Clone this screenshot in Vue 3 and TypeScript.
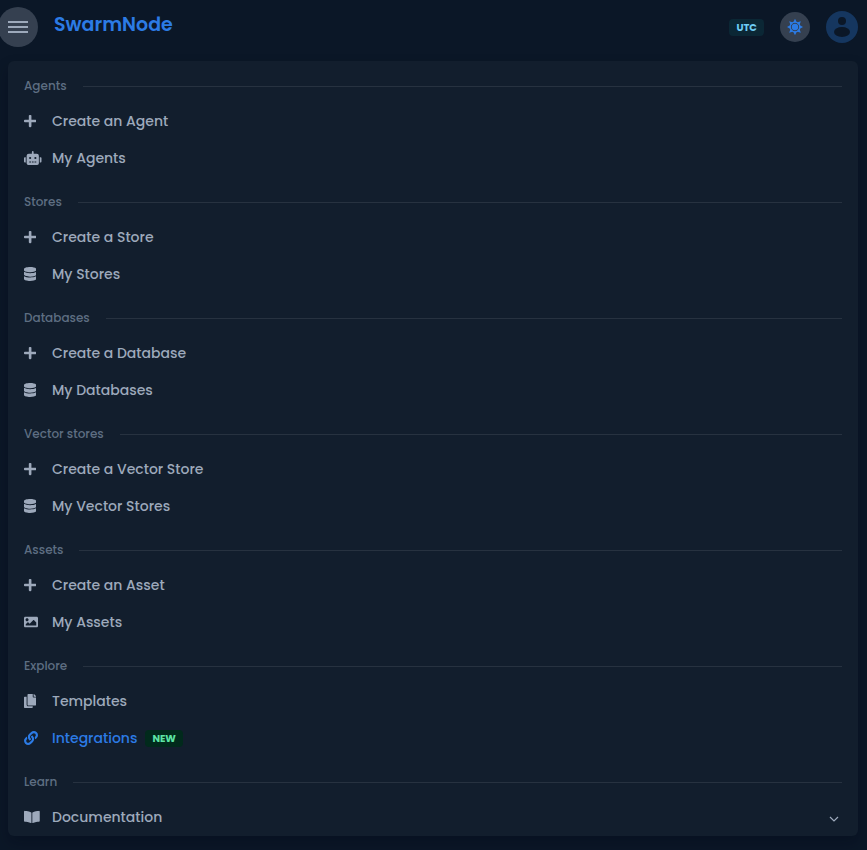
<script setup lang="ts">
interface Item {
  label: string
  icon: string
  active?: boolean
  badge?: string
  expandable?: boolean
}
interface Section {
  title: string
  items: Item[]
}
interface Glyph {
  width: number
  path: string
}

const glyphs: Record<string, Glyph> = {
  plus: {
    width: 448,
    path: 'M416 208H272V64c0-17.67-14.33-32-32-32h-32c-17.67 0-32 14.33-32 32v144H32c-17.67 0-32 14.33-32 32v32c0 17.67 14.33 32 32 32h144v144c0 17.67 14.33 32 32 32h32c17.67 0 32-14.33 32-32V304h144c17.67 0 32-14.33 32-32v-32c0-17.67-14.33-32-32-32z',
  },
  robot: {
    width: 640,
    path: 'M32 224H64V416H32A32 32 0 0 1 0 384V256A32 32 0 0 1 32 224Zm512-48V448a64 64 0 0 1-64 64H160a64 64 0 0 1-64-64V176a80 80 0 0 1 80-80H288V32a32 32 0 0 1 64 0V96H464A80 80 0 0 1 544 176ZM264 256a40 40 0 1 0-40 40A40 40 0 0 0 264 256Zm-8 128H192v32h64Zm96 0H288v32h64ZM456 256a40 40 0 1 0-40 40A40 40 0 0 0 456 256Zm-8 128H384v32h64ZM640 256V384a32 32 0 0 1-32 32H576V224h32A32 32 0 0 1 640 256Z',
  },
  database: {
    width: 448,
    path: 'M448 73.143v45.714C448 159.143 347.667 192 224 192S0 159.143 0 118.857V73.143C0 32.857 100.333 0 224 0s224 32.857 224 73.143zM448 176v102.857C448 319.143 347.667 352 224 352S0 319.143 0 278.857V176c48.125 33.143 136.208 48.572 224 48.572S399.874 209.143 448 176zm0 160v102.857C448 479.143 347.667 512 224 512S0 479.143 0 438.857V336c48.125 33.143 136.208 48.572 224 48.572S399.874 369.143 448 336z',
  },
  image: {
    width: 512,
    path: 'M464 448H48c-26.51 0-48-21.49-48-48V112c0-26.51 21.49-48 48-48h416c26.51 0 48 21.49 48 48v288c0 26.51-21.49 48-48 48zM112 120c-30.928 0-56 25.072-56 56s25.072 56 56 56 56-25.072 56-56-25.072-56-56-56zM64 384h384V272l-87.515-87.515c-4.686-4.686-12.284-4.686-16.971 0L208 320l-55.515-55.515c-4.686-4.686-12.284-4.686-16.971 0L64 336v48z',
  },
  copy: {
    width: 448,
    path: 'M320 448v40c0 13.255-10.745 24-24 24H24c-13.255 0-24-10.745-24-24V120c0-13.255 10.745-24 24-24h72v296c0 30.879 25.121 56 56 56h168zm0-344V0H152c-13.255 0-24 10.745-24 24v368c0 13.255 10.745 24 24 24h272c13.255 0 24-10.745 24-24V128H344c-13.2 0-24-10.8-24-24zm120.971-31.029L375.029 7.029A24 24 0 0 0 358.059 0H352v96h96v-6.059a24 24 0 0 0-7.029-16.97z',
  },
  link: {
    width: 512,
    path: 'M326.612 185.391c59.747 59.809 58.927 155.698.36 214.59-.11.12-.24.25-.36.37l-67.2 67.2c-59.27 59.27-155.699 59.262-214.96 0-59.27-59.26-59.27-155.7 0-214.96l37.106-37.106c9.84-9.84 26.786-3.3 27.294 10.606.648 17.722 3.826 35.527 9.69 52.721 1.986 5.822.567 12.262-3.783 16.612l-13.087 13.087c-28.026 28.026-28.905 73.66-1.155 101.96 28.024 28.579 74.086 28.749 102.325.51l67.2-67.19c28.191-28.191 28.073-73.757 0-101.83-3.701-3.694-7.429-6.564-10.341-8.569a16.037 16.037 0 0 1-6.947-12.606c-.396-10.567 3.348-21.456 11.698-29.806l21.054-21.055c5.521-5.521 14.182-6.199 20.584-1.731a152.482 152.482 0 0 1 20.522 17.197zM467.547 44.449c-59.261-59.262-155.69-59.27-214.96 0l-67.2 67.2c-.12.12-.25.25-.36.37-58.566 58.892-59.387 154.781.36 214.59a152.454 152.454 0 0 0 20.521 17.196c6.402 4.468 15.064 3.789 20.584-1.731l21.054-21.055c8.35-8.35 12.094-19.239 11.698-29.806a16.037 16.037 0 0 0-6.947-12.606c-2.912-2.005-6.64-4.875-10.341-8.569-28.073-28.073-28.191-73.639 0-101.83l67.2-67.19c28.239-28.239 74.3-28.069 102.325.51 27.75 28.3 26.872 73.934-1.155 101.96l-13.087 13.087c-4.35 4.35-5.769 10.79-3.783 16.612 5.864 17.194 9.042 34.999 9.69 52.721.509 13.906 17.454 20.446 27.294 10.606l37.106-37.106c59.271-59.259 59.271-155.699.001-214.959z',
  },
  book: {
    width: 576,
    path: 'M542.22 32.05c-54.8 3.11-163.72 14.43-230.96 55.59-4.64 2.84-7.27 7.89-7.27 13.17v363.87c0 11.55 12.63 18.85 23.28 13.49 69.18-34.82 169.23-44.32 218.7-46.92 16.89-.89 30.02-14.43 30.02-30.66V62.75c.01-17.71-15.35-31.74-33.77-30.7zM264.73 87.64C197.5 46.48 88.58 35.17 33.78 32.05 15.36 31.01 0 45.04 0 62.75V400.6c0 16.24 13.13 29.78 30.02 30.66 49.49 2.6 149.59 12.11 218.77 46.95 10.62 5.35 23.21-1.94 23.21-13.46V100.63c0-5.29-2.62-10.14-7.27-12.99z',
  },
}

const sections: Section[] = [
  { title: 'Agents', items: [{ label: 'Create an Agent', icon: 'plus' }, { label: 'My Agents', icon: 'robot' }] },
  { title: 'Stores', items: [{ label: 'Create a Store', icon: 'plus' }, { label: 'My Stores', icon: 'database' }] },
  { title: 'Databases', items: [{ label: 'Create a Database', icon: 'plus' }, { label: 'My Databases', icon: 'database' }] },
  { title: 'Vector stores', items: [{ label: 'Create a Vector Store', icon: 'plus' }, { label: 'My Vector Stores', icon: 'database' }] },
  { title: 'Assets', items: [{ label: 'Create an Asset', icon: 'plus' }, { label: 'My Assets', icon: 'image' }] },
  { title: 'Explore', items: [{ label: 'Templates', icon: 'copy' }, { label: 'Integrations', icon: 'link', active: true, badge: 'NEW' }] },
  { title: 'Learn', items: [{ label: 'Documentation', icon: 'book', expandable: true }] },
]

const rays = [0, 45, 90, 135, 180, 225, 270, 315]
</script>

<template>
  <div class="page">
    <header class="topbar">
      <button class="menu" type="button" aria-label="Toggle navigation">
        <svg width="20" height="12" viewBox="0 0 20 12" aria-hidden="true">
          <path d="M0 1h20M0 6h20M0 11h20" stroke="currentColor" stroke-width="2" />
        </svg>
      </button>
      <a class="brand" href="#">SwarmNode</a>
      <div class="tools">
        <span class="zone">UTC</span>
        <button class="theme" type="button" aria-label="Switch theme">
          <svg width="16" height="16" viewBox="0 0 16 16" aria-hidden="true">
            <path v-for="r in rays" :key="r" d="M8 -0.2L9.9 3.6H6.1Z" :transform="`rotate(${r} 8 8)`" fill="currentColor" />
            <circle cx="8" cy="8" r="4.8" fill="none" stroke="currentColor" stroke-width="1.3" />
            <circle cx="8" cy="8" r="3.2" fill="currentColor" />
          </svg>
        </button>
        <button class="account" type="button" aria-label="Account">
          <svg width="32" height="32" viewBox="0 0 32 32" aria-hidden="true">
            <circle cx="16" cy="10" r="4" fill="currentColor" />
            <ellipse cx="16" cy="21" rx="8" ry="5" fill="currentColor" />
          </svg>
        </button>
      </div>
    </header>

    <nav class="panel" aria-label="Main">
      <section v-for="section in sections" :key="section.title">
        <h2 class="heading">{{ section.title }}</h2>
        <ul class="items">
          <li v-for="item in section.items" :key="item.label">
            <a class="item" :class="{ active: item.active }" href="#">
              <span class="icon">
                <svg height="14" :viewBox="`0 0 ${glyphs[item.icon].width} 512`" aria-hidden="true">
                  <path :d="glyphs[item.icon].path" fill="currentColor" />
                </svg>
              </span>
              <span>{{ item.label }}</span>
              <span v-if="item.badge" class="badge">{{ item.badge }}</span>
              <svg v-if="item.expandable" class="chevron" width="10" height="6" viewBox="0 0 10 6" aria-hidden="true">
                <path d="M1 1l4 4 4-4" fill="none" stroke="currentColor" stroke-width="1.2" />
              </svg>
            </a>
          </li>
        </ul>
      </section>
    </nav>
  </div>
</template>

<style>
body {
  background: #0b1727;
}
</style>

<style scoped>
.page {
  min-height: 100vh;
  box-sizing: border-box;
  padding-bottom: 14px;
  overflow: hidden;
  background: #0b1727;
  color: #9da9bb;
  font-family: Poppins, Inter, "Liberation Sans", sans-serif;
}
button {
  display: flex;
  align-items: center;
  justify-content: center;
  padding: 0;
  border: 0;
  border-radius: 50%;
  cursor: pointer;
}
a {
  text-decoration: none;
}
.topbar {
  display: flex;
  align-items: center;
  height: 54px;
  margin-bottom: 7px;
  padding-right: 9px;
}
.menu {
  flex: none;
  width: 40px;
  height: 40px;
  margin-left: -2px;
  background: #354050;
  color: #9da9bb;
}
.brand {
  margin-left: 16px;
  padding-bottom: 4px;
  color: #2c7be5;
  font-size: 19px;
  font-weight: 600;
  line-height: 30px;
}
.tools {
  display: flex;
  align-items: center;
  gap: 16px;
  margin-left: auto;
}
.zone,
.badge {
  border-radius: 4px;
  padding: 0 7px;
  font-size: 10px;
  font-weight: 700;
  line-height: 17px;
}
.zone {
  background: #0b2735;
  color: #6fcdf5;
}
.badge {
  margin: 0 0 1px 8px;
  background: #012a1c;
  color: #5de5a5;
}
.theme {
  width: 30px;
  height: 30px;
  background: #354050;
  color: #2c7be5;
}
.account {
  width: 32px;
  height: 32px;
  background: #15365f;
  color: #0b1727;
}
.panel {
  margin: 0 9px 0 8px;
  padding: 0 16px;
  border-radius: 6px;
  background: #121e2d;
  box-shadow: 0 7px 14px rgba(0, 8, 24, 0.3);
  overflow: hidden;
}
.heading {
  display: flex;
  align-items: center;
  gap: 16px;
  margin: 16px 0 8px;
  color: #5e6e82;
  font-size: 12px;
  font-weight: 500;
  line-height: 18px;
}
.heading::after {
  content: "";
  flex: 1;
  height: 1px;
  background: #273240;
}
.items {
  margin: 0;
  padding: 0;
  list-style: none;
}
.item {
  display: flex;
  align-items: center;
  height: 37px;
  color: #9da9bb;
  font-size: 14px;
  font-weight: 500;
}
.item.active {
  color: #2c7be5;
}
.icon {
  display: flex;
  flex: none;
  width: 28px;
  padding-bottom: 2px;
}
.chevron {
  margin: 3px 3px 0 auto;
}
</style>
